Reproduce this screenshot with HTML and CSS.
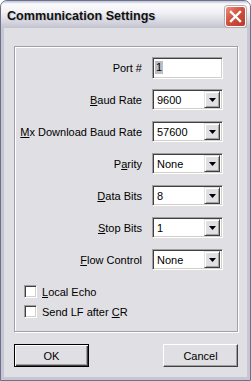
FILE: index.html
```html
<!DOCTYPE html>
<html lang="en">
<head>
  <meta charset="UTF-8">
  <title>Communication Settings</title>
  <link rel="stylesheet" href="styles.css">
</head>
<body>

  <div class="window">
    <!-- title bar -->
    <div class="titlebar">
      <span class="title">Communication Settings</span>
      <div class="close">
        <svg width="13" height="13" viewBox="0 0 13 13">
          <path d="M2 2 L11 11 M11 2 L2 11" stroke="#fff" stroke-width="2.4" stroke-linecap="square"/>
        </svg>
      </div>
    </div>

    <div class="client">
      <div class="group">
        <div class="fields">
          <label>Port #</label>
          <div class="edit"><span class="sel">1</span></div>

          <label><u>B</u>aud Rate</label>
          <div class="combo"><span>9600</span><i class="drop"><svg width="7" height="4"><polygon points="0,0 7,0 3.5,4" fill="#000"/></svg></i></div>

          <label><u>M</u>x Download Baud Rate</label>
          <div class="combo"><span>57600</span><i class="drop"><svg width="7" height="4"><polygon points="0,0 7,0 3.5,4" fill="#000"/></svg></i></div>

          <label>P<u>a</u>rity</label>
          <div class="combo"><span>None</span><i class="drop"><svg width="7" height="4"><polygon points="0,0 7,0 3.5,4" fill="#000"/></svg></i></div>

          <label><u>D</u>ata Bits</label>
          <div class="combo"><span>8</span><i class="drop"><svg width="7" height="4"><polygon points="0,0 7,0 3.5,4" fill="#000"/></svg></i></div>

          <label><u>S</u>top Bits</label>
          <div class="combo"><span>1</span><i class="drop"><svg width="7" height="4"><polygon points="0,0 7,0 3.5,4" fill="#000"/></svg></i></div>

          <label><u>F</u>low Control</label>
          <div class="combo"><span>None</span><i class="drop"><svg width="7" height="4"><polygon points="0,0 7,0 3.5,4" fill="#000"/></svg></i></div>
        </div>

        <div class="checks">
          <div class="check"><span class="box"></span><span><u>L</u>ocal Echo</span></div>
          <div class="check"><span class="box"></span><span>Send LF after <u>C</u>R</span></div>
        </div>
      </div>

      <div class="buttons">
        <div class="btn default">OK</div>
        <div class="btn">Cancel</div>
      </div>
    </div>
  </div>

</body>
</html>
```

FILE: styles.css
```css
body {
  margin: 0;
  padding: 0;
  font-family: 'Liberation Sans', Arial, sans-serif;
  font-size: 11px;
  color: #000;
  background: #fff;
}
.window {
  width: 251px;
  height: 381px;
  box-sizing: border-box;
  border: 1px solid #6f6f86;
  border-radius: 7px 7px 0 0;
  background: #c6c6d4;
  display: flex;
  flex-direction: column;
  overflow: hidden;
}
.titlebar {
  height: 27px;
  display: flex;
  align-items: center;
  justify-content: space-between;
  padding: 0 4px 0 6px;
  background: linear-gradient(#b9bfd8 0, #fbfbfd 3px, #f2f2f6 40%, #dcdce4 70%, #c3c3d1 100%);
}
.title {
  font-size: 12.6px;
  font-weight: bold;
  color: #111;
  text-shadow: 1px 1px 0 #c8c8d2;
  margin-top: 2px;
}
.close {
  width: 19px;
  height: 19px;
  margin-top: 4px;
  border: 1px solid #fff;
  border-radius: 3px;
  background: linear-gradient(135deg, #ee8e7c, #d2503e 45%, #b53a2a);
  display: flex;
  align-items: center;
  justify-content: center;
  box-shadow: 0 0 0 1px #b7a9b0;
}
.client {
  flex: 1;
  margin: 0 3px 3px;
  background: #e0dfe3;
  padding: 18px 9px 10px 10px;
}
.group {
  border: 1px solid #a09fab;
  box-shadow: inset 1px 1px 0 #fff, 1px 1px 0 #fff;
  padding: 10px 0 13px 0;
}
.fields {
  display: grid;
  grid-template-columns: 127px 71px;
  grid-auto-rows: 21px;
  column-gap: 10px;
  row-gap: 11px;
  align-items: center;
}
.fields label {
  text-align: right;
  white-space: nowrap;
}
.edit, .combo {
  height: 21px;
  box-sizing: border-box;
  background: #fff;
  border-top: 1px solid #a0a0a0;
  border-left: 1px solid #a0a0a0;
  border-right: 1px solid #fff;
  border-bottom: 1px solid #fff;
  box-shadow: inset 1px 1px 0 #404040, inset -1px -1px 0 #d4d0c8;
  display: flex;
  align-items: center;
}
.edit {
  height: 22px;
  padding-left: 2px;
}
.sel {
  background: #bdbdc4;
  padding: 0 1px;
  line-height: 13px;
}
.combo {
  padding: 2px 2px 2px 4px;
  justify-content: space-between;
}
.drop {
  width: 16px;
  height: 17px;
  box-sizing: border-box;
  background: #e0dfe3;
  border-top: 1px solid #e0dfe3;
  border-left: 1px solid #e0dfe3;
  border-right: 1px solid #404040;
  border-bottom: 1px solid #404040;
  box-shadow: inset 1px 1px 0 #fff, inset -1px -1px 0 #a0a0a0;
  display: flex;
  align-items: center;
  justify-content: center;
}
.drop svg {
  display: block;
}
.checks {
  margin-top: 15px;
  padding-left: 9px;
  display: flex;
  flex-direction: column;
  gap: 7px;
}
.check {
  display: flex;
  align-items: center;
  gap: 5px;
  height: 13px;
}
.box {
  width: 13px;
  height: 13px;
  box-sizing: border-box;
  background: #fff;
  border-top: 1px solid #a0a0a0;
  border-left: 1px solid #a0a0a0;
  border-right: 1px solid #fff;
  border-bottom: 1px solid #fff;
  box-shadow: inset 1px 1px 0 #404040, inset -1px -1px 0 #d4d0c8;
}
.buttons {
  display: flex;
  justify-content: space-between;
  margin-top: 12px;
}
.btn {
  width: 75px;
  height: 23px;
  box-sizing: border-box;
  background: #e0dfe3;
  border-top: 1px solid #fff;
  border-left: 1px solid #fff;
  border-right: 1px solid #404040;
  border-bottom: 1px solid #404040;
  box-shadow: inset -1px -1px 0 #a0a0a0;
  display: flex;
  align-items: center;
  justify-content: center;
}
.default {
  border: 1px solid #000;
  box-shadow: inset 1px 1px 0 #fff, inset -1px -1px 0 #404040, inset -2px -2px 0 #a0a0a0;
}
```
